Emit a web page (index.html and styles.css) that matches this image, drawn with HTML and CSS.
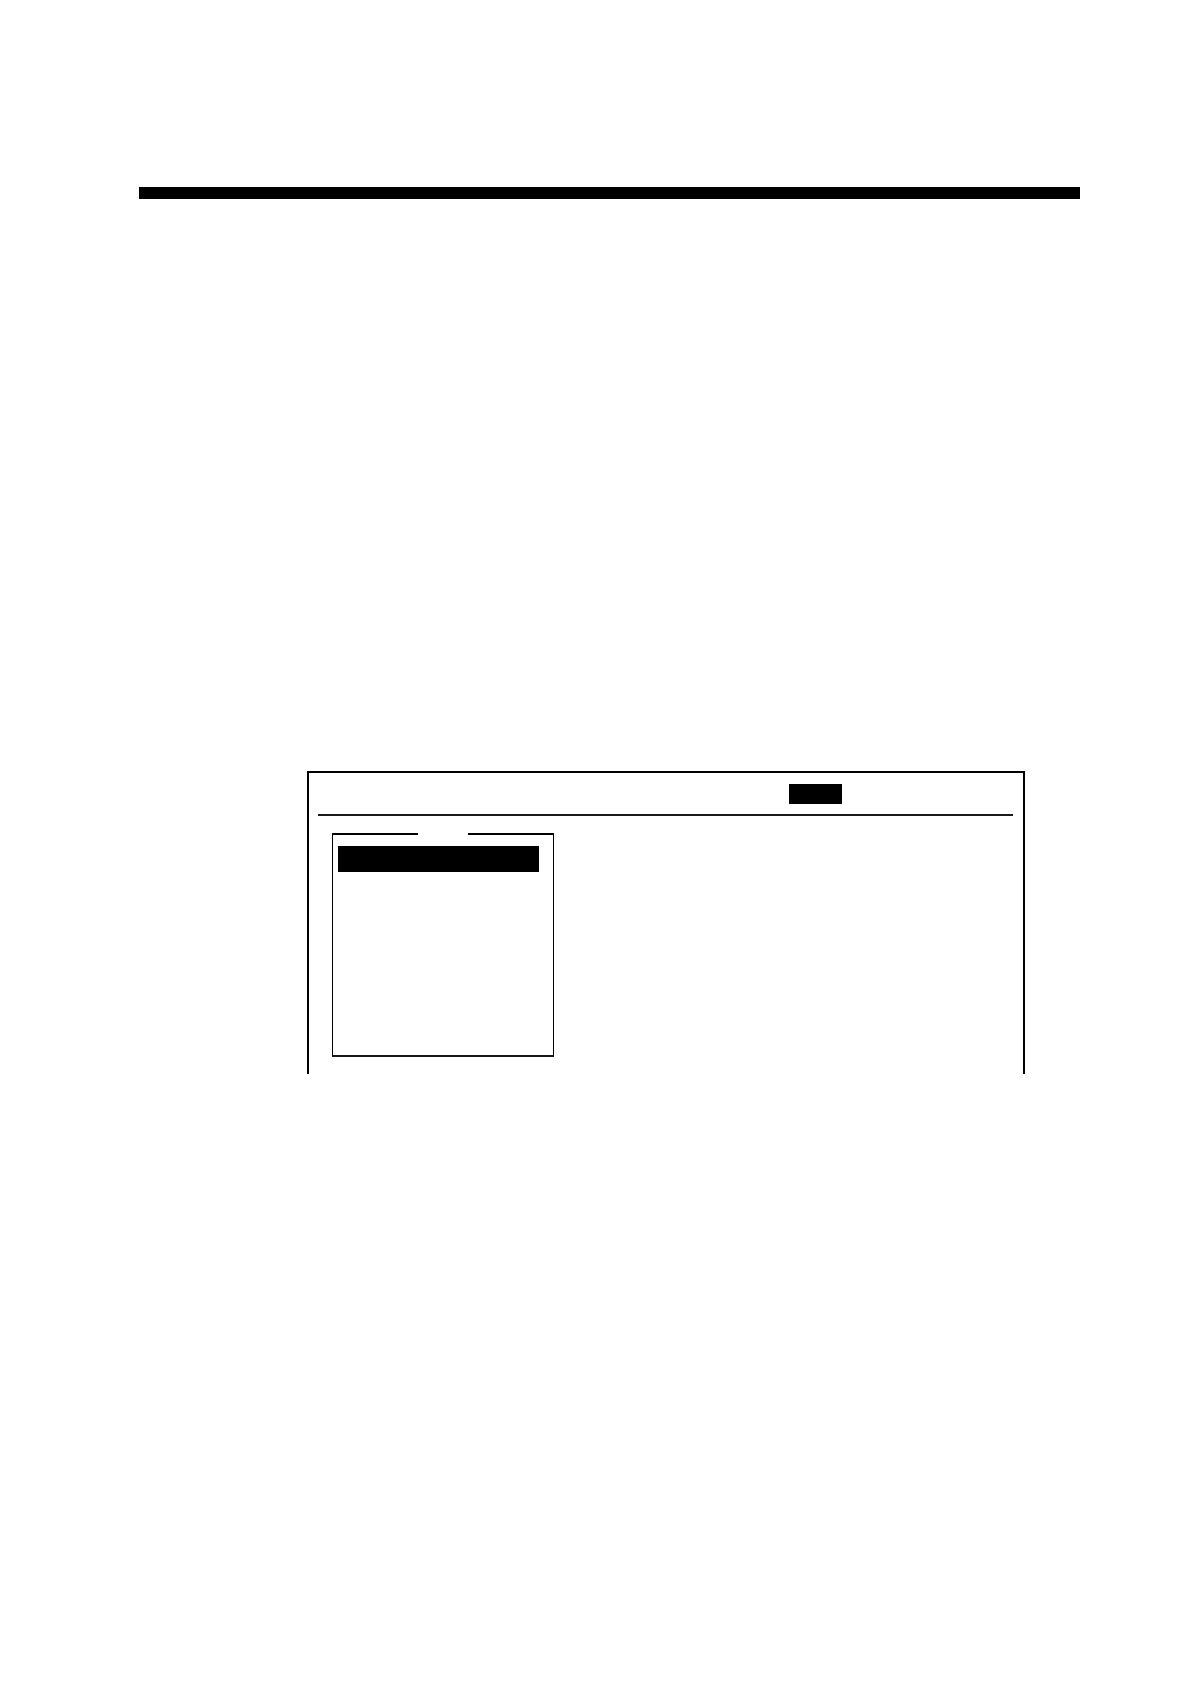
FILE: index.html
```html
<!DOCTYPE html>
<html lang="en">
<head>
<meta charset="utf-8">
<title>Menu screen</title>
<link rel="stylesheet" href="styles.css">
</head>
<body>
<div class="page">
  <div class="title-bar"></div>
  <div class="panel">
    <div class="panel-header">
      <div class="status-block"></div>
    </div>
    <div class="panel-rule"></div>
    <div class="panel-body">
      <div class="menu-box">
        <div class="menu-top">
          <span class="menu-top-seg menu-top-left"></span>
          <span class="menu-top-gap"></span>
          <span class="menu-top-seg menu-top-right"></span>
        </div>
        <div class="menu-list">
          <div class="menu-item selected"></div>
        </div>
      </div>
    </div>
  </div>
</div>
</body>
</html>
```
FILE: styles.css
```css
html, body {
  margin: 0;
  padding: 0;
  background: #ffffff;
  font-family: "Liberation Sans", Arial, sans-serif;
}

.page {
  width: 1190px;
  height: 1684px;
  padding-top: 187px;
  box-sizing: border-box;
}

.title-bar {
  margin-left: 139px;
  width: 941px;
  height: 12px;
  background: #000;
}

.panel {
  margin-top: 572px;
  margin-left: 307px;
  width: 718px;
  height: 303px;
  box-sizing: border-box;
  border: 2px solid #000;
  border-bottom: none;
  display: flex;
  flex-direction: column;
}

.panel-header {
  padding-top: 11px;
  padding-left: 480px;
  height: 20px;
}

.status-block {
  width: 53px;
  height: 20px;
  background: #000;
}

.panel-rule {
  margin: 10px 10px 0 9px;
  height: 2px;
  background: #1a1a1a;
}

.panel-body {
  padding-top: 17px;
  padding-left: 23px;
}

.menu-box {
  width: 222px;
  height: 224px;
  box-sizing: border-box;
  border-left: 1px solid #000;
  border-right: 1px solid #000;
  border-bottom: 2px solid #1a1a1a;
  display: flex;
  flex-direction: column;
}

.menu-top {
  display: flex;
  height: 2px;
  margin: 0 -1px;
}

.menu-top-seg {
  height: 2px;
  background: #000;
}

.menu-top-left {
  width: 86px;
}

.menu-top-gap {
  width: 50px;
}

.menu-top-right {
  flex: 1;
}

.menu-list {
  padding-top: 11px;
  padding-left: 5px;
}

.menu-item {
  width: 201px;
  height: 26px;
}

.menu-item.selected {
  background: #000;
}
```
